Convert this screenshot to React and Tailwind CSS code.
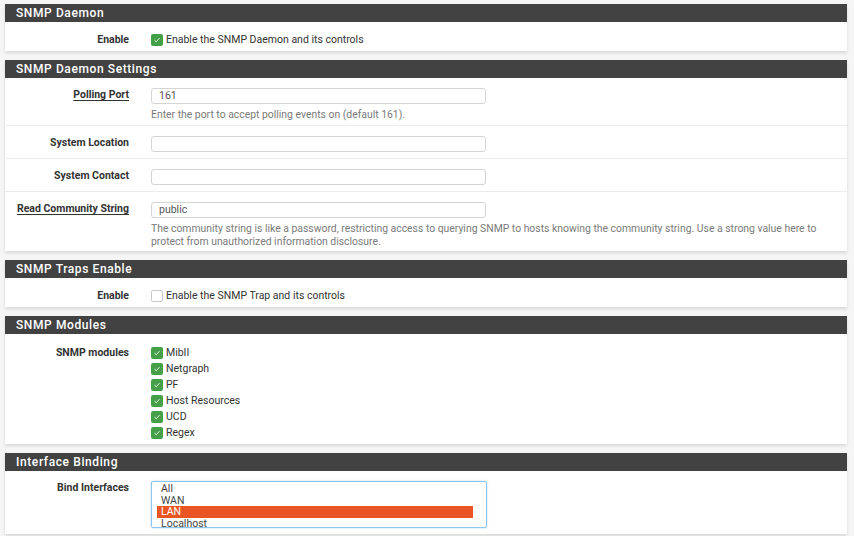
import React from 'react';

const font = { fontFamily: 'Roboto, "Liberation Sans", sans-serif' };

const Check = ({ on }) =>
  on ? (
    <span className="inline-flex items-center justify-center w-[12px] h-[12px] rounded-[2px] bg-[#43a047] shrink-0">
      <svg width="8" height="8" viewBox="0 0 8 8" fill="none">
        <path d="M1.5 4.2 L3.2 5.8 L6.5 2.2" stroke="#e8f5e9" strokeWidth="1" />
      </svg>
    </span>
  ) : (
    <span className="inline-block w-[12px] h-[12px] rounded-[2px] border border-[#c8c8c8] bg-white shrink-0" />
  );

const Panel = ({ title, children }) => (
  <div className="mb-[9px] bg-white shadow-[0_2px_3px_rgba(0,0,0,0.12)]">
    <div className="h-[18px] bg-[#424242] flex items-center pl-[11px] text-white text-[12px] font-medium tracking-[0.6px]">
      {title}
    </div>
    {children}
  </div>
);

const Row = ({ label, underline, border, children, pt = 'pt-[10px]', pb = 'pb-[6px]' }) => (
  <div className={`flex ${pt} ${pb} ${border ? 'border-t border-[#ececec]' : ''}`}>
    <div className="w-[134px] pr-[10px] text-right text-[10.5px] font-bold text-[#333] leading-[13px] shrink-0">
      <span className={underline ? 'underline underline-offset-2' : ''}>{label}</span>
    </div>
    <div className="pl-[12px] flex-1 text-[10.5px] text-[#333]">{children}</div>
  </div>
);

const Input = ({ value }) => (
  <div className="w-[335px] h-[16px] border border-[#d4d4d4] rounded-[3px] px-[7px] text-[10.5px] leading-[14px] text-[#555]">
    {value}
  </div>
);

const Help = ({ children }) => (
  <div className="mt-[4px] text-[10.4px] leading-[13px] text-[#7a7a7a] pr-[20px]">{children}</div>
);

const CheckLine = ({ on, text }) => (
  <div className="flex items-center gap-[3px] h-[13px]">
    <Check on={on} />
    <span className="text-[10.5px] leading-[13px] text-[#333]">{text}</span>
  </div>
);

export default function App() {
  const modules = ['MibII', 'Netgraph', 'PF', 'Host Resources', 'UCD', 'Regex'];
  return (
    <div style={font} className="w-[854px] h-[536px] bg-[#f5f5f5] pt-[4px] pl-[5px] pr-[7px] overflow-hidden">
      <Panel title="SNMP Daemon">
        <Row label="Enable" pt="pt-[11px]" pb="pb-[5px]">
          <CheckLine on text="Enable the SNMP Daemon and its controls" />
        </Row>
      </Panel>

      <Panel title="SNMP Daemon Settings">
        <Row label="Polling Port" underline pb="pb-[4px]">
          <Input value="161" />
          <Help>Enter the port to accept polling events on (default 161).</Help>
        </Row>
        <Row label="System Location" border>
          <Input />
        </Row>
        <Row label="System Contact" border>
          <Input />
        </Row>
        <Row label="Read Community String" underline border pb="pb-[3px]">
          <Input value="public" />
          <Help>
            The community string is like a password, restricting access to querying SNMP to hosts knowing the community string. Use a strong value here to protect from unauthorized information disclosure.
          </Help>
        </Row>
      </Panel>

      <Panel title="SNMP Traps Enable">
        <Row label="Enable" pt="pt-[11px]" pb="pb-[5px]">
          <CheckLine on={false} text="Enable the SNMP Trap and its controls" />
        </Row>
      </Panel>

      <Panel title="SNMP Modules">
        <Row label="SNMP modules" pt="pt-[12px]" pb="pb-[5px]">
          <div className="flex flex-col gap-[3px]">
            {modules.map((m) => (
              <CheckLine key={m} on text={m} />
            ))}
          </div>
        </Row>
      </Panel>

      <Panel title="Interface Binding">
        <Row label="Bind Interfaces" pt="pt-[10px]">
          <div className="w-[336px] h-[47px] border border-[#8ec4f0] rounded-[2px] shadow-[0_0_2px_rgba(100,170,240,0.5)] pt-[1px] px-[5px] text-[10.5px] leading-[11.7px] text-[#444]">
            <div className="pl-[4px]">All</div>
            <div className="pl-[4px]">WAN</div>
            <div className="pl-[4px] w-[316px] bg-[#ea5524] text-white">LAN</div>
            <div className="pl-[4px]">Localhost</div>
          </div>
        </Row>
      </Panel>
    </div>
  );
}
